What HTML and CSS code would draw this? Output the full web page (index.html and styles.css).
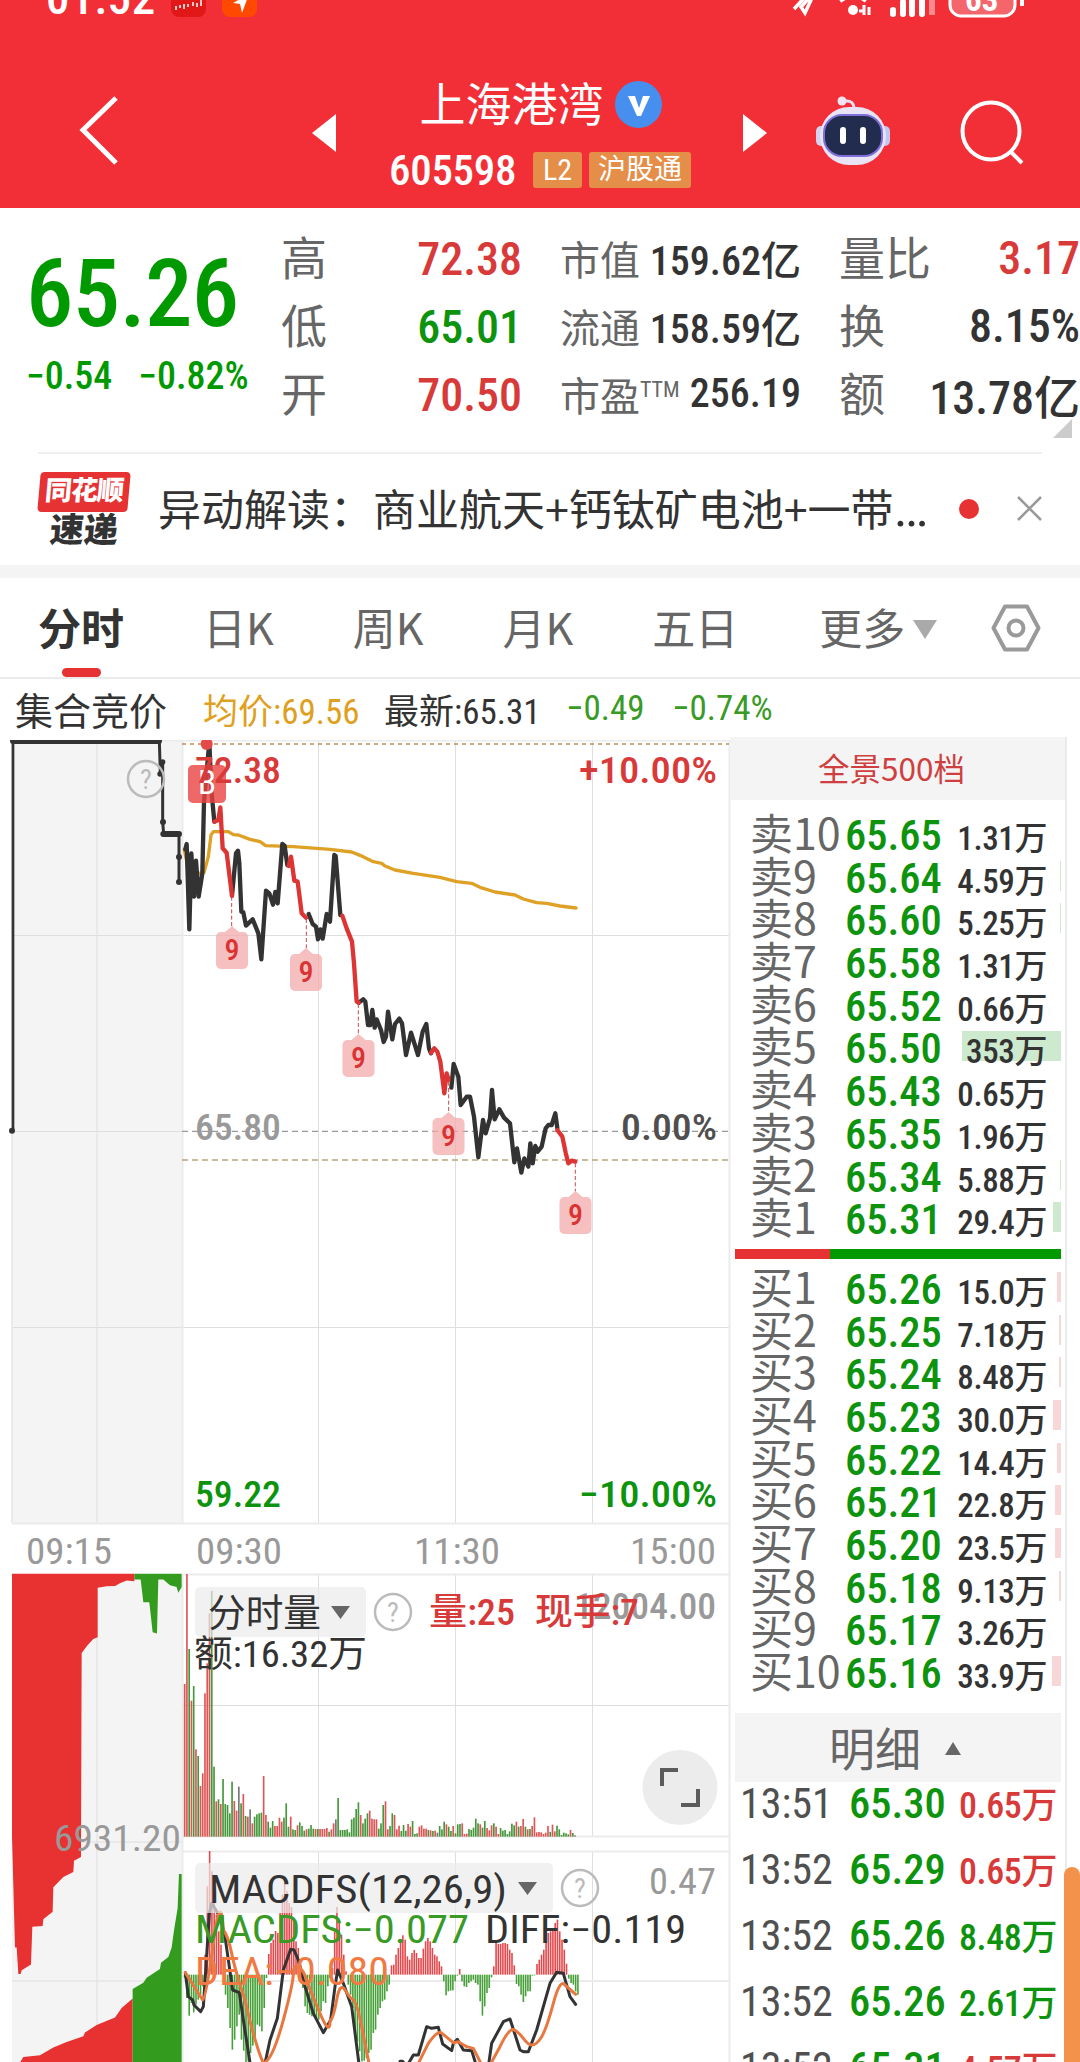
FILE: index.html
```html
<!DOCTYPE html>
<html lang="zh-CN">
<head>
  <meta charset="UTF-8" />
  <meta name="viewport" content="width=device-width, initial-scale=1.0"/>
  <title>上海港湾 605598</title>
  <link rel="stylesheet" href="styles.css">
</head>
<body>
  <header class="header">
    <div class="status-bar">
      <div class="status-left">
        <span class="clock">01:52</span>
        <svg class="app-icons" width="86" height="36" viewBox="0 0 86 36">
          <rect width="35" height="35" rx="8" fill="#e01818"/>
          <path d="M5 24v4M9 26v-3M13 27v-5M17 22v3M22 20v4M26 21v4M30 18v6" stroke="#fff" stroke-width="1.500"/>
          <rect x="51" width="35" height="35" rx="8" fill="#ff4800"/>
          <path d="M62 21l16-9-7 19-2-9z" fill="#fff"/>
        </svg>
      </div>
      <svg class="status-right" width="236" height="40" viewBox="0 0 236 40">
        <path d="M3 31l12-13M11 8l9 14-6 13-4-6 9-10" fill="none" stroke="#fff" stroke-width="3.500"/>
        <path d="M49 23q14-10 26 0" fill="none" stroke="#fff" stroke-width="4"/>
        <circle cx="62" cy="32" r="5" fill="#fff"/>
        <path d="M68 33h4M73 27v10M78 29v8" stroke="#fff" stroke-width="3"/>
        <path d="M102 32v4M112 24v12M121 18v18M131 12v24" stroke="#fff" stroke-width="6" stroke-linecap="round"/>
        <path d="M141 8v29" stroke="#f88a8e" stroke-width="6"/>
        <rect x="159" y="4" width="65" height="34" rx="11" fill="#f4666c" stroke="#fff" stroke-width="3"/>
        <path d="M231 16v12" stroke="#fff" stroke-width="4"/>
        <text x="174" y="33" class="battery">63</text>
      </svg>
    </div>
    <div class="nav">
      <svg class="back" width="42" height="72" viewBox="0 0 42 72">
        <path d="M39 3L6 35l33 33" fill="none" stroke="#fff" stroke-width="5"/>
      </svg>
      <svg class="prev" width="24" height="38" viewBox="0 0 24 38"><path d="M24 0v38L0 19z" fill="#fff"/></svg>
      <div class="stock">
        <div class="stock-name">
          <span>上海港湾</span>
          <svg width="47" height="47" viewBox="0 0 47 47">
            <circle cx="23.500" cy="23.500" r="23.500" fill="#468fee"/>
            <path d="M13 15h7l4 12 4-12h7l-9 20h-4z" fill="#fff"/>
          </svg>
        </div>
        <div class="stock-code">
          <span class="code">605598</span>
          <span class="tag">L2</span>
          <span class="tag">沪股通</span>
        </div>
      </div>
      <svg class="next" width="24" height="38" viewBox="0 0 24 38"><path d="M0 0v38l24-19z" fill="#fff"/></svg>
      <svg class="robot" width="76" height="70" viewBox="0 0 76 70">
        <path d="M39 13q0-9-9-8" fill="none" stroke="#e8def2" stroke-width="3"/>
        <circle cx="27" cy="5" r="4.500" fill="#efe6f5"/>
        <rect x="1" y="30" width="12" height="20" rx="5" fill="#d5d3ee"/>
        <rect x="63" y="30" width="12" height="20" rx="5" fill="#c3c6ef"/>
        <rect x="5" y="11" width="66" height="58" rx="29" fill="#e8e4f6"/>
        <rect x="9" y="19" width="58" height="41" rx="18" fill="#222c4f" stroke="#7f6fd8" stroke-width="2"/>
        <path d="M28 34v11M48 34v11" stroke="#fff" stroke-width="6" stroke-linecap="round"/>
      </svg>
      <svg class="search" width="64" height="66" viewBox="0 0 64 66">
        <circle cx="31" cy="31" r="28.500" fill="none" stroke="#fff" stroke-width="4"/>
        <path d="M50 51l12 12" stroke="#fff" stroke-width="4"/>
      </svg>
    </div>
  </header>

  <section class="quote">
    <div class="price-box">
      <div class="price">65.26</div>
      <div class="change"><span>−0.54</span><span>−0.82%</span></div>
    </div>
    <dl class="stats stats-a">
      <dt>高</dt><dd class="red">72.38</dd>
      <dt>低</dt><dd class="green">65.01</dd>
      <dt>开</dt><dd class="red">70.50</dd>
    </dl>
    <dl class="stats stats-b">
      <dt>市值</dt><dd>159.62亿</dd>
      <dt>流通</dt><dd>158.59亿</dd>
      <dt>市盈<sup>TTM</sup></dt><dd>256.19</dd>
    </dl>
    <dl class="stats stats-c">
      <dt>量比</dt><dd class="red">3.17</dd>
      <dt>换</dt><dd>8.15%</dd>
      <dt>额</dt><dd>13.78亿</dd>
    </dl>
    <span class="corner"></span>
  </section>

  <section class="news">
    <div class="news-logo">
      <span class="logo-top">同花顺</span>
      <span class="logo-bottom">速递</span>
    </div>
    <p>异动解读：商业航天+钙钛矿电池+一带<span class="more">…</span></p>
    <span class="dot"></span>
    <svg width="25" height="25" viewBox="0 0 25 25"><path d="M1 1l23 23M24 1L1 24" stroke="#999" stroke-width="2.500"/></svg>
  </section>

  <nav class="tabs">
    <span class="tab active">分时</span>
    <span class="tab">日K</span>
    <span class="tab">周K</span>
    <span class="tab">月K</span>
    <span class="tab">五日</span>
    <span class="tab">更多<i class="caret"></i></span>
    <svg class="gear" width="50" height="50" viewBox="0 0 50 50">
      <path d="M14 3.500h22L47.500 25 36 46.500H14L2.500 25z" fill="none" stroke="#999" stroke-width="4" stroke-linejoin="round"/>
      <circle cx="25" cy="25" r="7.500" fill="none" stroke="#999" stroke-width="4"/>
    </svg>
  </nav>

  <main class="main">
    <div class="chart-side">
      <div class="legend">
        <span class="auction">集合竞价</span>
        <span class="avg">均价:69.56</span>
        <span class="last">最新:65.31</span>
        <span class="down">−0.49</span>
        <span class="down">−0.74%</span>
      </div>

      <svg class="chart" width="734" height="1322" viewBox="0 740 734 1322">
        <!-- call auction background and grid -->
        <path d="M12 740H182V1523H12zM12 1574H182V2062H12z" fill="#f4f4f4"/>
        <g stroke="#dedede" fill="none">
          <path d="M97 740V1523M97 1574V2062M318.500 740V1523M318.500 1574V1837M318.500 1851V2062M455.500 740V1523M455.500 1574V1837M455.500 1851V2062M592.500 740V1523M592.500 1574V1837M592.500 1851V2062M12 935.500H729M12 1131.500H182M12 1327.500H729M182 1705.500H729M12 1842H182M12 1981H182"/>
          <path d="M12 740V1523M182.500 740V1523M182.500 1574V2062M729.500 740V2062M12 740.500H729M12 1523.500H729M182 1574.500H729M182 1836.500H729M182 1851.500H729M182 1981H729" stroke="#ebebeb" stroke-width="2"/>
        </g>

        <!-- auction volume -->
        <g transform="translate(0 1470) scale(.3333 .3775)">
          <path fill="#e83131" d="M36 275H403V295L380 293L360 300L345 307L320 308L293 312V443L280 448L262 465L245 485L243 1025L222 1035L220 1065L190 1078L160 1105L158 1170L130 1190L128 1208L97 1210L93 1310L65 1325L62 1335H55L50 1265H45L42 1170L36 970z"/>
          <path fill="#339c1e" d="M403 275H545V310L535 325L530 310L510 305L490 290L475 290L471 433L458 430L448 350H430L422 290H403z"/>
          <path fill="#e83131" d="M60 1570L70 1555L120 1550L160 1530L200 1515L250 1500L255 1490L290 1470L345 1450L365 1425L398 1400V1570z"/>
          <path fill="#339c1e" d="M398 1570V1375L430 1358L440 1345L480 1322L483 1305L505 1290L515 1265L522 1220L533 1160L537 1070H545V1570z"/>
        </g>

        <!-- price chart, 3 units per px -->
        <g transform="translate(0 730) scale(.33333)" fill="none" stroke-linejoin="round" stroke-linecap="round">
          <path d="M546 42H2187" stroke="#c28d50" stroke-width="5" stroke-dasharray="12 12" stroke-linecap="butt"/>
          <path d="M546 1204H2187" stroke="#999" stroke-width="4" stroke-dasharray="18 12" stroke-linecap="butt"/>
          <path d="M546 1290H2187" stroke="#b8a57a" stroke-width="5" stroke-dasharray="18 12" stroke-linecap="butt"/>
          <g stroke="#333" fill="#333">
            <path d="M39 33V1200" stroke-width="8"/>
            <path d="M39 33H477M490 312H537" stroke-width="18"/>
            <path d="M478 33L481 130M488 96V276L491 312M537 312V456" stroke-width="9" fill="none"/>
            <g stroke="none"><circle cx="36" cy="1202" r="9"/><circle cx="480" cy="132" r="8"/><circle cx="488" cy="96" r="8"/><circle cx="489" cy="276" r="9"/><circle cx="537" cy="381" r="9"/><circle cx="537" cy="456" r="9"/></g>
          </g>
          <polyline stroke="#dfa026" stroke-width="10" points="553,358 565,420 598,430 612,428 625,380 633,315 640,305 685,305 700,314 715,315 750,328 780,335 797,347 880,350 990,358 1055,366 1080,376 1120,395 1145,400 1155,408 1185,420 1240,430 1320,442 1370,455 1415,460 1440,472 1485,486 1545,495 1570,507 1610,518 1640,520 1680,528 1728,534"/>
          <g stroke="#333" stroke-width="13">
            <polyline points="556,358 560,342 568,598 574,370 582,500 588,392 596,500 607,430 612,215 628,35 634,180 643,275"/>
            <polyline points="696,497 708,370 714,362 718,400 724,545 730,547 738,587 758,568 775,610 784,688 798,482 808,490 819,524 826,486 833,520 847,342 854,348 862,405"/>
            <polyline points="926,552 938,582 948,590 954,628 961,598 968,626 980,552 990,575 1003,375 1007,378 1021,555"/>
            <polyline points="1076,818 1090,808 1096,815 1104,885 1111,885 1117,840 1124,893 1130,868 1143,900 1151,936 1158,920 1164,845 1177,928 1185,882 1198,866 1206,880 1218,975 1233,908 1254,975 1268,905 1279,882 1287,955 1293,970"/>
            <polyline points="1354,1073 1361,1002 1375,1040 1382,1125 1400,1100 1410,1100 1422,1160 1435,1282 1449,1170 1457,1210 1470,1165 1476,1080 1484,1168 1498,1138 1512,1163 1530,1180 1543,1297 1551,1255 1564,1328 1573,1285 1585,1310 1591,1240 1598,1300 1606,1248 1613,1265 1625,1250 1637,1195 1645,1185 1655,1185 1666,1150 1672,1195"/>
          </g>
          <g stroke="#dd3434" stroke-width="13">
            <polyline points="643,275 655,270 661,232 668,355 680,368 696,497"/>
            <polyline points="866,408 873,380 883,452 893,455 905,550 918,563"/>
            <polyline points="1027,557 1040,595 1056,635 1062,700 1070,815 1076,818"/>
            <polyline points="1293,968 1303,955 1312,965 1321,995 1333,1090 1340,1030 1346,1050"/>
            <polyline points="1672,1200 1687,1220 1697,1268 1705,1300 1715,1292 1726,1295"/>
          </g>
          <path d="M695 500V590M919 567V656M1075 822V914M1346 1055V1148M1726 1300V1385" stroke="#c8494c" stroke-width="3" stroke-dasharray="12 7" stroke-linecap="butt"/>
          <circle cx="620" cy="42" r="18" fill="#e54a4a"/>
        </g>
        <g id="marks"></g>

        <g id="volume" transform="translate(170 1560) scale(.33333)"></g>
        <g transform="translate(170 1840) scale(.33333)" fill="none" stroke-linejoin="round" stroke-linecap="round">
          <g id="macd"></g>
          <g stroke="#333" stroke-width="9">
            <polyline points="46,398 55,470 68,480 72,495 92,515 100,500 108,380 118,220 125,190 150,230 165,290 188,450 208,458 220,540 242,680"/>
            <polyline points="285,670 300,600 322,535 340,390 362,328 372,330 385,360 402,430 430,520 460,578 482,540 495,440 503,390 520,430 545,500 568,680"/>
            <polyline points="690,664 698,664 710,680 730,645 745,645 770,560 785,565 805,562 818,612 845,632 850,610 862,598 880,630 905,632 920,680"/>
            <polyline points="955,680 965,610 1000,545 1020,537 1050,630 1060,635 1075,635 1100,570 1140,430 1160,397 1180,400 1200,470 1217,493"/>
          </g>
          <g stroke="#e87840" stroke-width="9">
            <path d="M46 398L98 480Q108 475 130 310T160 270Q175 290 185 340T225 480Q245 570 265 630T287 665Q310 650 340 540T370 400T390 385Q400 390 410 420T450 520T480 543Q490 535 500 480T525 450T550 480T575 560L597 670"/>
            <path d="M745 670L775 610Q800 575 812 577L850 608L865 605L890 620L910 625L938 680M960 675L990 620Q1015 568 1030 568Q1045 575 1060 595T1085 615Q1100 615 1115 590T1150 490T1185 435L1217 463"/>
          </g>
        </g>

        <!-- indicator selectors -->
        <g fill="#ebebeb" fill-opacity=".7">
          <rect x="195" y="1587" width="171" height="50" rx="5"/>
          <rect x="195" y="1863" width="358" height="50" rx="5"/>
        </g>
        <path d="M331 1606h19l-9.500 13zM518 1882h19l-9.500 13z" fill="#666"/>
        <circle cx="680" cy="1787.500" r="37.500" fill="#ececec"/>
        <path d="M662 1786v-16h16M698 1789v16h-17" fill="none" stroke="#5c5c5c" stroke-width="4"/>
        <g id="helps"></g>
        <g id="labels"></g>
      </svg>
    </div>

    <aside class="book">
      <div class="book-title">全景500档</div>
      <div class="levels" id="sells"></div>
      <div class="ratio"><i></i></div>
      <div class="levels" id="buys"></div>
      <div class="detail-title">明细<i></i></div>
      <div id="trades"></div>
    </aside>
    <span class="scroll-thumb"></span>
  </main>

  <script>
    const red = '#d83a3a', green = '#399a26', dark = '#333', gray = '#999';

    // text, x, baseline, width, size, color, medium weight
    const labels = [
      ['12004.00', 574, 1619, 142, 37, gray, 1],
      ['72.38', 195, 783, 86, 36, red, 1],
      ['+10.00%', 579, 783, 138, 36, red, 1],
      ['65.80', 195, 1140, 86, 36, gray, 1],
      ['0.00%', 621, 1140, 96, 36, '#4f4f4f', 1],
      ['59.22', 195, 1507, 86, 36, '#0d930d', 1],
      ['−10.00%', 579, 1507, 138, 36, '#0d930d', 1],
      ['09:15', 26, 1564, 86, 37, gray, 0],
      ['09:30', 196, 1564, 86, 37, gray, 0],
      ['11:30', 414, 1564, 86, 37, gray, 0],
      ['15:00', 630, 1564, 86, 37, gray, 0],
      ['6931.20', 54, 1851, 127, 37, gray, 0],
      ['分时量', 208, 1626, 113, 38, dark, 0],
      ['量:25', 429, 1625, 86, 37, red, 1],
      ['现手:7', 535, 1625, 104, 37, red, 1],
      ['额:16.32万', 194, 1667, 173, 37, dark, 0],
      ['MACDFS(12,26,9)', 209, 1903, 298, 38, dark, 0],
      ['MACDFS:−0.077', 195, 1943, 274, 38, green, 0],
      ['DIFF:−0.119', 485, 1943, 201, 38, dark, 0],
      ['DEA:−0.080', 195, 1985, 194, 38, '#f07a42', 0],
      ['0.47', 649, 1894, 67, 37, gray, 0]
    ];
    document.getElementById('labels').innerHTML = labels.map(l =>
      `<text x="${l[1]}" y="${l[2]}" textLength="${l[3]}" lengthAdjust="spacingAndGlyphs" font-size="${l[4]}" fill="${l[5]}" font-weight="${l[6] ? 460 : 400}">${l[0]}</text>`
    ).join('');

    // nine-turn markers
    const marks = [[232, 932], [306, 954], [358.500, 1040], [448.500, 1118], [575.500, 1197]];
    document.getElementById('marks').innerHTML = marks.map(m => `
      <path d="M${m[0] - 7} ${m[1]}l7-6 7 6z" fill="#f5bfc0"/>
      <rect x="${m[0] - 16}" y="${m[1]}" width="32" height="37" rx="5" fill="#f3a9ab" fill-opacity=".75"/>
      <text x="${m[0]}" y="${m[1] + 28}" text-anchor="middle" font-size="30" font-weight="500" fill="#d93333">9</text>`
    ).join('') + `
      <rect x="188" y="765" width="38" height="38" rx="5" fill="#ea4242" fill-opacity=".8"/>
      <text x="207" y="794" text-anchor="middle" font-size="33" fill="#fff">B</text>`;

    document.getElementById('helps').innerHTML = [[146, 779], [393, 1612], [580, 1888]].map(h => `
      <circle cx="${h[0]}" cy="${h[1]}" r="18" fill="none" stroke="#bbb" stroke-width="2.500"/>
      <text x="${h[0]}" y="${h[1] + 10}" text-anchor="middle" font-size="28" fill="#bbb">?</text>`
    ).join('');

    const colors = { r: '#dd5555', g: '#46973c', k: '#777' };
    const volume = '458r 788r 563g 408r 452g 262r 242g 152r 190r 430r 520r 670r 737g 210g 106r 112g 98r 173g 98g 95g 70g 165g 107r 78r 150k 100g 128r 62g 60r 82k 40r 60g 67g 70g 72g 182r 65r 45g 27g 47g 32r 32r 57r 45r 57g 100g 30g 60r 22g 20g 34r 43g 32g 18g 22r 24g 35g 24g 23r 23g 23r 23r 23r 26r 15g 22r 40r 52k 116g 20g 20g 20g 22g 13g 52g 57g 83g 103g 65r 40g 54g 70g 78r 54r 52r 52r 24g 40g 95g 106r 22r 32g 70g 65r 22r 33r 17g 35g 18g 38r 30r 47g 8g 10g 30r 34r 24r 24r 20g 19r 17g 18r 12k 32g 22g 45g 37r 30g 17g 32r 10g 37g 38g 40r 8r 9r 23g 20g 27g 54g 40g 37r 27g 47g 26r 19r 34r 40g 30r 8r 26g 18g 20g 8g 16g 39g 34g 45r 30g 32r 53r 30g 22r 23g 32r 58r 13r 14r 13r 8r 12r 32r 14g 36r 16r 33g 22g 5g 12g 10g 7g 20r 11g 4k'.split(' ');
    document.getElementById('volume').innerHTML = volume.map((v, i) => {
      const h = parseInt(v);
      return `<rect x="${41.5 + i * 6.77}" y="${830 - h}" width="5" height="${h}" fill="${colors[v.slice(-1)]}"/>`;
    }).join('');

    const macd = [-10, -70, -123, -85, -113, -90, -75, -60, -35, 60, 265, 371, 310, 220, 180, 130, 90, 5, -60, -100, -160, -225, -195, -155, -120, -195, -228, -262, -260, -235, -213, -190, -150, -155, -170, -100, -10, 62, 95, 105, 131, 125, 185, 240, 275, 250, 215, 203, 160, 100, 80, 30, -40, -95, -115, -120, -125, -125, -130, -135, -110, -80, -85, -35, -10, 20, 130, 203, 160, 120, 60, 10, -30, -60, -100, -160, -200, -230, -260, -258, -250, -235, -225, -175, -165, -120, -100, -80, -75, -50, -30, 28, 30, 60, 80, 105, 118, 105, 55, 45, 65, 74, 65, 50, 50, 78, 100, 110, 100, 80, 60, 55, 40, 25, -20, -62, -50, -48, -47, -20, -3, 17, -20, -35, -37, -25, -20, -15, -25, -30, -80, -123, -95, -55, -40, -8, 25, 100, 92, 92, 95, 95, 92, 75, 65, 28, -28, -35, -60, -82, -65, -50, -50, -3, -2, 32, 45, 60, 75, 95, 125, 130, 140, 155, 165, 130, 105, 75, 33, -12, -25, -30, -50, -60];
    document.getElementById('macd').innerHTML = macd.map((v, i) =>
      `<rect x="${41.5 + i * 6.82}" y="${v > 0 ? 404 - v : 404}" width="4.8" height="${Math.abs(v)}" fill="${v > 0 ? '#e4484c' : '#46a038'}"/>`
    ).join('');

    // name, price, amount, bar width
    const sells = [
      ['卖10', '65.65', '1.31万', 0], ['卖9', '65.64', '4.59万', 1], ['卖8', '65.60', '5.25万', 1],
      ['卖7', '65.58', '1.31万', 0], ['卖6', '65.52', '0.66万', 0], ['卖5', '65.50', '353万', 99],
      ['卖4', '65.43', '0.65万', 0], ['卖3', '65.35', '1.96万', 0], ['卖2', '65.34', '5.88万', 1], ['卖1', '65.31', '29.4万', 8]
    ];
    const buys = [
      ['买1', '65.26', '15.0万', 4], ['买2', '65.25', '7.18万', 2], ['买3', '65.24', '8.48万', 2],
      ['买4', '65.23', '30.0万', 8], ['买5', '65.22', '14.4万', 4], ['买6', '65.21', '22.8万', 6],
      ['买7', '65.20', '23.5万', 6], ['买8', '65.18', '9.13万', 2], ['买9', '65.17', '3.26万', 0], ['买10', '65.16', '33.9万', 9]
    ];
    function drawLevels(id, rows) {
      document.getElementById(id).innerHTML = rows.map(r => `
        <div class="level">
          <span class="name">${r[0]}</span><span class="level-price">${r[1]}</span><span class="amount">${r[2]}</span>
          <i class="bar" style="width:${r[3]}px"></i>
        </div>`).join('');
    }
    drawLevels('sells', sells);
    drawLevels('buys', buys);

    const trades = [
      ['13:51', '65.30', '0.65万', 'red'], ['13:52', '65.29', '0.65万', 'red'], ['13:52', '65.26', '8.48万', 'green'],
      ['13:52', '65.26', '2.61万', 'green'], ['13:52', '65.31', '4.57万', 'red']
    ];
    document.getElementById('trades').innerHTML = trades.map(t => `
      <div class="trade"><span class="time">${t[0]}</span><span class="level-price">${t[1]}</span><span class="amount ${t[3]}">${t[2]}</span></div>`
    ).join('');
  </script>
</body>
</html>
```
FILE: styles.css
```css
* {
  box-sizing: border-box;
}

body {
  margin: 0;
  width: 1080px;
  height: 2062px;
  overflow: hidden;
  background: #fff;
  color: #333;
  font-family: Roboto, "Noto Sans CJK SC", sans-serif;
  font-stretch: 87%;
}

.red { color: #d83a3a; }
.green { color: #0d930d; }

/* header */
.header {
  height: 208px;
  background: #f22f37;
  color: #fff;
  overflow: hidden;
}

.status-bar {
  display: flex;
  justify-content: space-between;
  align-items: flex-end;
  height: 38px;
  margin-top: -20px;
  padding: 0 53px 0 46px;
}

.status-left {
  display: flex;
  align-items: flex-end;
  gap: 14px;
}

.clock {
  width: 111px;
  font-size: 47px;
  font-weight: 500;
  line-height: 41px;
  letter-spacing: .8px;
}

.battery {
  font-size: 33px;
  font-weight: 700;
  fill: #fff;
}

.nav {
  display: flex;
  height: 190px;
  padding-left: 77px;
}

.nav > svg {
  flex: none;
}

.back { margin-top: 77px; }
.prev { margin: 96px 0 0 193px; }
.next { margin-top: 96px; }
.robot { margin: 78px 0 0 48px; }
.search { margin: 82px 0 0 69px; }

.stock {
  width: 407px;
  padding-top: 60px;
}

.stock-name {
  display: flex;
  justify-content: center;
  align-items: center;
  gap: 11px;
  height: 54px;
  padding-left: 2px;
  font-size: 46px;
  line-height: 54px;
}

.stock-name svg {
  margin-top: -2px;
}

.stock-code {
  display: flex;
  align-items: center;
  height: 60px;
  margin-top: 8px;
  padding-left: 53px;
}

.code {
  width: 144px;
  font-size: 43px;
  font-weight: 500;
  letter-spacing: -.3px;
}

.tag {
  height: 36px;
  margin-right: 7px;
  padding: 0 9px;
  border-radius: 3px;
  background: #e58e49;
  font-size: 28px;
  line-height: 35px;
}

.tag:nth-child(2) {
  padding: 0 10px;
  font-size: 30px;
}

/* quote */
.quote {
  position: relative;
  display: flex;
  height: 244px;
  padding-top: 17px;
}

.price-box {
  flex: none;
  width: 281px;
  padding: 22px 0 0 26px;
  color: #009900;
  font-weight: 500;
  white-space: nowrap;
}

.price {
  height: 94px;
  font-size: 95px;
  line-height: 94px;
  letter-spacing: -.8px;
}

.change {
  display: flex;
  gap: 26px;
  margin-top: 12px;
  font-size: 38px;
  line-height: 46px;
}

.stats {
  display: grid;
  grid-template-columns: 46px 1fr;
  grid-auto-rows: 68px;
  align-items: center;
  margin: 0;
  white-space: nowrap;
}

.stats dt {
  padding-bottom: 8px;
  color: #666;
}

.stats dd {
  margin: 0;
  font-weight: 500;
  text-align: right;
}

.stats-a {
  width: 241px;
  font-size: 46px;
}

.stats-b {
  width: 241px;
  margin-left: 38px;
  font-size: 40px;
}

.stats-b dt { padding-bottom: 3px; }
.stats-b dd { padding-bottom: 3px; }

.stats-c {
  width: 241px;
  margin-left: 38px;
  font-size: 46px;
}

.stats-c dd { padding-bottom: 2px; }

.stats sup {
  font-size: 22px;
  line-height: 0;
  vertical-align: 14px;
}

.corner {
  position: absolute;
  right: 8px;
  bottom: 14px;
  border-left: 19px solid transparent;
  border-bottom: 19px solid #ccc;
}

/* news */
.news {
  display: flex;
  align-items: center;
  height: 113px;
  margin: 0 38px;
  border-top: 2px solid #f0f0f0;
}

.news-logo {
  display: flex;
  flex-direction: column;
  align-items: center;
  width: 92px;
  font-weight: 900;
}

.logo-top {
  width: 90px;
  height: 40px;
  border-radius: 4px;
  background: #e63232;
  color: #fff;
  font-size: 27px;
  line-height: 38px;
  text-align: center;
  letter-spacing: -1px;
  transform: skewX(-5deg);
}

.logo-bottom {
  font-size: 34px;
  line-height: 36px;
  transform: skewX(-5deg);
}

.news p {
  width: 804px;
  margin: 0;
  padding: 0 0 6px 28px;
  font-family: "Noto Sans CJK SC", sans-serif;
  font-size: 43px;
  line-height: 60px;
  white-space: nowrap;
}

.more {
  font-family: Roboto, sans-serif;
  font-stretch: 100%;
  font-size: 52px;
  line-height: 0;
}

.dot {
  width: 20px;
  height: 20px;
  margin: 0 38px 2px 26px;
  border-radius: 50%;
  background: #e63232;
}

.news svg {
  flex: none;
  margin-bottom: 2px;
}

/* tabs */
.tabs {
  display: flex;
  align-items: center;
  height: 114px;
  padding: 0 38px 0 38px;
  border-top: 13px solid #f4f4f4;
  border-bottom: 2px solid #ebebeb;
  color: #666;
  font-family: "Noto Sans CJK SC", sans-serif;
  font-size: 43px;
}

.tab {
  position: relative;
  height: 99px;
  margin-right: 79px;
  line-height: 96px;
  white-space: nowrap;
}

.tab:nth-child(5) { margin-right: 81px; }
.tab:nth-child(6) { margin-right: 54px; }

.tab.active {
  color: #333;
  font-weight: 700;
}

.tab.active::after {
  content: "";
  position: absolute;
  left: 24px;
  bottom: 0;
  width: 39px;
  height: 9px;
  border-radius: 5px;
  background: #e63232;
}

.caret {
  display: inline-block;
  margin-left: 8px;
  border: 12px solid transparent;
  border-top: 19px solid #aaa;
  border-bottom: 0;
  vertical-align: 6px;
}

.gear { flex: none; }

/* chart */
.main {
  position: relative;
  display: flex;
}

.chart-side {
  width: 734px;
}

.legend {
  display: flex;
  align-items: center;
  height: 61px;
  padding: 0 0 2px 15px;
  font-size: 35px;
  white-space: nowrap;
}

.legend span { flex: none; }

.auction {
  width: 188px;
  font-size: 38px;
}

.avg {
  width: 181px;
  color: #df9f20;
}

.last { width: 182px; }

.down {
  width: 106px;
  color: #399a26;
}

.chart {
  display: block;
}

.chart text {
  font-family: Roboto, "Noto Sans CJK SC", sans-serif;
}

/* order book */
.book {
  flex: none;
  width: 333px;
  margin-top: 58px;
  border-right: 2px solid #ebebeb;
  white-space: nowrap;
}

.book-title {
  height: 63px;
  margin: 0 0 12px -4px;
  padding-right: 12px;
  background: #f4f4f4;
  color: #cf3f3f;
  font-family: "Noto Sans CJK SC", sans-serif;
  font-size: 31.500px;
  line-height: 61px;
  text-align: center;
}

.level {
  position: relative;
  display: flex;
  align-items: baseline;
  height: 42.7px;
  padding-left: 16px;
  line-height: 38px;
}

.name {
  width: 95px;
  color: #666;
  font-family: "Noto Sans CJK SC", sans-serif;
  font-size: 43px;
}

.level-price {
  width: 99px;
  color: #0d930d;
  font-size: 42.500px;
  font-weight: 500;
}

.amount {
  width: 103px;
  font-size: 33px;
  font-weight: 500;
  text-align: right;
  letter-spacing: -.4px;
}

.bar {
  position: absolute;
  z-index: -1;
  right: 4px;
  top: 6px;
  height: 30px;
  background: #cde9ce;
}

#buys .bar { background: #f7d7d8; }

.ratio {
  height: 10px;
  margin: 10px 4px 7px 1px;
  background: #009900;
}

.ratio i {
  display: block;
  width: 95px;
  height: 10px;
  background: #e63232;
}

.detail-title {
  height: 69px;
  margin: 20px 4px 0 1px;
  padding-left: 94px;
  background: #f4f4f4;
  color: #666;
  font-family: "Noto Sans CJK SC", sans-serif;
  font-size: 46px;
  line-height: 67px;
}

.detail-title i {
  display: inline-block;
  margin-left: 24px;
  border: 8.5px solid transparent;
  border-bottom: 13px solid #666;
  border-top: 0;
  vertical-align: 11px;
}

.trade {
  display: flex;
  align-items: baseline;
  height: 66px;
  padding-left: 6px;
  line-height: 44px;
}

.time {
  width: 109px;
  color: #505050;
  font-size: 42px;
  font-weight: 450;
}

.trade .amount {
  width: 109px;
  font-size: 36px;
}

.amount.red { color: #d83a3a; }
.amount.green { color: #0d930d; }

.scroll-thumb {
  position: absolute;
  right: 0;
  top: 1188px;
  width: 16px;
  height: 220px;
  border-radius: 8px 8px 0 0;
  background: #f3924a;
}
```
